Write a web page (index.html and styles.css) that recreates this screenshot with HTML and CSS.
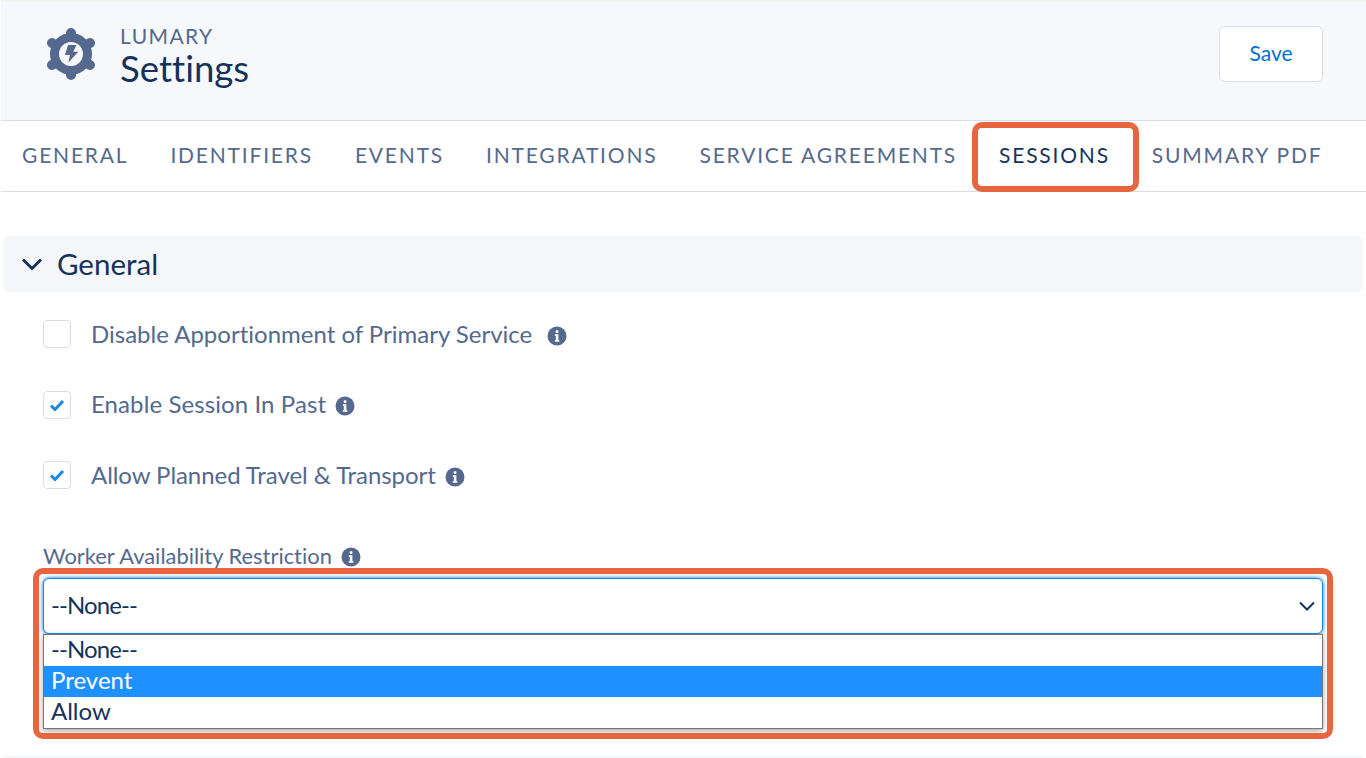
FILE: index.html
```html
<!DOCTYPE html>
<html lang="en">
<head>
<meta charset="utf-8">
<title>Lumary Settings</title>
<link rel="stylesheet" href="styles.css">
</head>
<body>
<div class="page">
  <header class="header">
    <div class="brand">
      <svg class="gear" viewBox="0 0 50 54" width="50" height="54" aria-hidden="true">
        <circle cx="25" cy="26" r="16.500" fill="none" stroke="#54698d" stroke-width="9"/>
        <g stroke="#54698d" stroke-width="10" stroke-linecap="round">
          <path d="M25 5v4M25 43v4"/>
          <path d="M6 15l3.500 2M40.500 35l3.500 2"/>
          <path d="M6 37l3.500-2M40.500 17l3.500-2"/>
        </g>
        <path fill="#54698d" d="M22 17H30.500L27.300 23.700H32.300L22.300 34.700L24 27H19z"/>
      </svg>
      <div class="titles">
        <div class="eyebrow">LUMARY</div>
        <h1 class="title">Settings</h1>
      </div>
    </div>
    <button class="save" type="button">Save</button>
  </header>
  <nav class="tabs">
    <a class="tab">GENERAL</a>
    <a class="tab">IDENTIFIERS</a>
    <a class="tab">EVENTS</a>
    <a class="tab">INTEGRATIONS</a>
    <a class="tab">SERVICE AGREEMENTS</a>
    <a class="tab active">SESSIONS</a>
    <a class="tab">SUMMARY PDF</a>
  </nav>
  <section class="section">
    <div class="section-head">
      <svg class="chev" viewBox="0 0 22 14" width="22" height="14" aria-hidden="true"><path d="M2 2.500l9 9 9-9" fill="none" stroke="#16325c" stroke-width="3"/></svg>
      <h2 class="section-title">General</h2>
    </div>
    <div class="fields">
      <label class="check first"><span class="box"></span><span class="check-label">Disable Apportionment of Primary Service</span><svg class="info wide" viewBox="0 0 20 20" width="20" height="20" aria-hidden="true"><use href="#i"/></svg></label>
      <label class="check"><span class="box"><svg viewBox="0 0 16 12" width="16" height="12" aria-hidden="true"><use href="#t"/></svg></span><span class="check-label loose">Enable Session In Past</span><svg class="info" viewBox="0 0 20 20" width="20" height="20" aria-hidden="true"><use href="#i"/></svg></label>
      <label class="check"><span class="box"><svg viewBox="0 0 16 12" width="16" height="12" aria-hidden="true"><use href="#t"/></svg></span><span class="check-label tight">Allow Planned Travel &amp; Transport</span><svg class="info" viewBox="0 0 20 20" width="20" height="20" aria-hidden="true"><use href="#i"/></svg></label>
      <div class="field-label"><span>Worker Availability Restriction</span><svg class="info" viewBox="0 0 20 20" width="20" height="20" aria-hidden="true"><use href="#i"/></svg></div>
      <div class="select">
        <span class="none">--None--</span>
        <svg viewBox="0 0 16 10" width="16" height="10" aria-hidden="true"><path d="M1 1.500l7 7 7-7" fill="none" stroke="#16325c" stroke-width="2"/></svg>
      </div>
      <ul class="options">
        <li class="none">--None--</li>
        <li class="selected">Prevent</li>
        <li>Allow</li>
      </ul>
    </div>
    <div class="next-bar"></div>
  </section>
  <div class="mark mark-tab"></div>
  <div class="mark mark-select"></div>
</div>
<svg class="defs" width="0" height="0" aria-hidden="true">
  <defs>
    <g id="i"><circle cx="10" cy="10" r="9.500" fill="#54698d"/><rect x="8.700" y="4.300" width="2.700" height="2.600" rx=".6" fill="#fff"/><path fill="#fff" d="M7.800 8.300h3.600v6h1v1.500H7.800v-1.500h1v-4.500h-1z"/></g>
    <path id="t" d="M2 6.500l4 4 8-8.500" fill="none" stroke="#1589ee" stroke-width="3"/>
  </defs>
</svg>
</body>
</html>
```
FILE: styles.css
```css
* { box-sizing: border-box; }
html, body { margin: 0; padding: 0; }
body { background: #fff; font-family: "Lato", "Open Sans", sans-serif; font-variant-ligatures: none; color: #54698d; }
.page { position: relative; width: 1366px; height: 758px; overflow: hidden; }
.header { height: 121px; margin-left: 1px; padding: 26px 43px 0 45px; background: #f7f8fb; border-top: 2px solid #f2f2f3; border-bottom: 1px solid #d8dde6; display: flex; justify-content: space-between; align-items: flex-start; }
.brand { display: flex; align-items: flex-start; gap: 24px; }
.gear { display: block; }
.titles { display: block; margin-top: -4px; }
.eyebrow { font-size: 21px; line-height: 24px; letter-spacing: 1.4px; color: #54698d; }
.title { margin: 0; font-size: 36.600px; line-height: 40px; font-weight: 400; color: #16325c; }
.save { width: 104px; height: 56px; margin-top: -2px; padding: 0 0 4px; background: #fff; border: 1px solid #d8dde6; border-radius: 6px; font: 21px "Lato", sans-serif; color: #0070d2; }
.tabs { height: 71px; margin-left: 1px; display: flex; align-items: center; gap: 42px; padding: 0 0 4px 21px; border-bottom: 1px solid #d8dde6; }
.tab { font-size: 21px; letter-spacing: 1.800px; color: #54698d; white-space: nowrap; }
.tab.active { color: #16325c; }
.section { padding: 44px 3px 0; }
.section-head { height: 56px; background: #f4f6f9; border-radius: 6px; display: flex; align-items: center; gap: 14px; padding: 0 0 2px 18px; }
.section-title { margin: 0; font-size: 29.500px; font-weight: 400; color: #16325c; }
.chev { margin-top: 2px; }
.fields { padding: 28px 40px 0; }
.check { display: flex; align-items: center; height: 28px; margin-bottom: 42.500px; }
.box { width: 28px; height: 28px; flex: none; border: 1px solid #d8dde6; border-radius: 4px; background: #fff; display: flex; align-items: center; justify-content: center; margin-right: 20px; }
.box svg { display: block; }
.check-label { font-size: 24px; white-space: nowrap; margin-top: -2px; }
.check-label.loose { letter-spacing: .09px; }
.check-label.tight { letter-spacing: -.06px; }
.info { flex: none; display: block; margin: 3px 0 0 9px; }
.info.wide { margin-left: 15px; }
.field-label { display: flex; align-items: center; height: 28px; font-size: 21.900px; margin-top: 52px; }
.field-label .info { margin-left: 9px; }
.select { height: 56px; margin-top: 9px; border: 1px solid #1589ee; border-radius: 6px; box-shadow: 0 0 4px #0070d2; background: #fff; display: flex; align-items: center; justify-content: space-between; padding: 0 7px 3px 7px; font-size: 24px; color: #16325c; }
.select svg { margin-top: 3px; }
.options { list-style: none; margin: 0; padding: 0; height: 95px; border: 1px solid #767676; box-shadow: 0 2px 6px rgba(0,0,0,.35); font-size: 24px; color: #16325c; background: #fff; }
.options li { height: 31px; line-height: 28px; padding-left: 7px; }
.options li.selected { background: #1e90ff; color: #fff; }
.none { letter-spacing: -.9px; }
.next-bar { height: 3px; margin-top: 27px; background: #f4f6f9; }
.mark { position: absolute; border: 6px solid #e76640; border-radius: 10px; pointer-events: none; }
.mark-tab { left: 972px; top: 122px; width: 167px; height: 70px; }
.mark-select { left: 33px; top: 568px; width: 1300px; height: 171px; }
.defs { position: absolute; }
```
